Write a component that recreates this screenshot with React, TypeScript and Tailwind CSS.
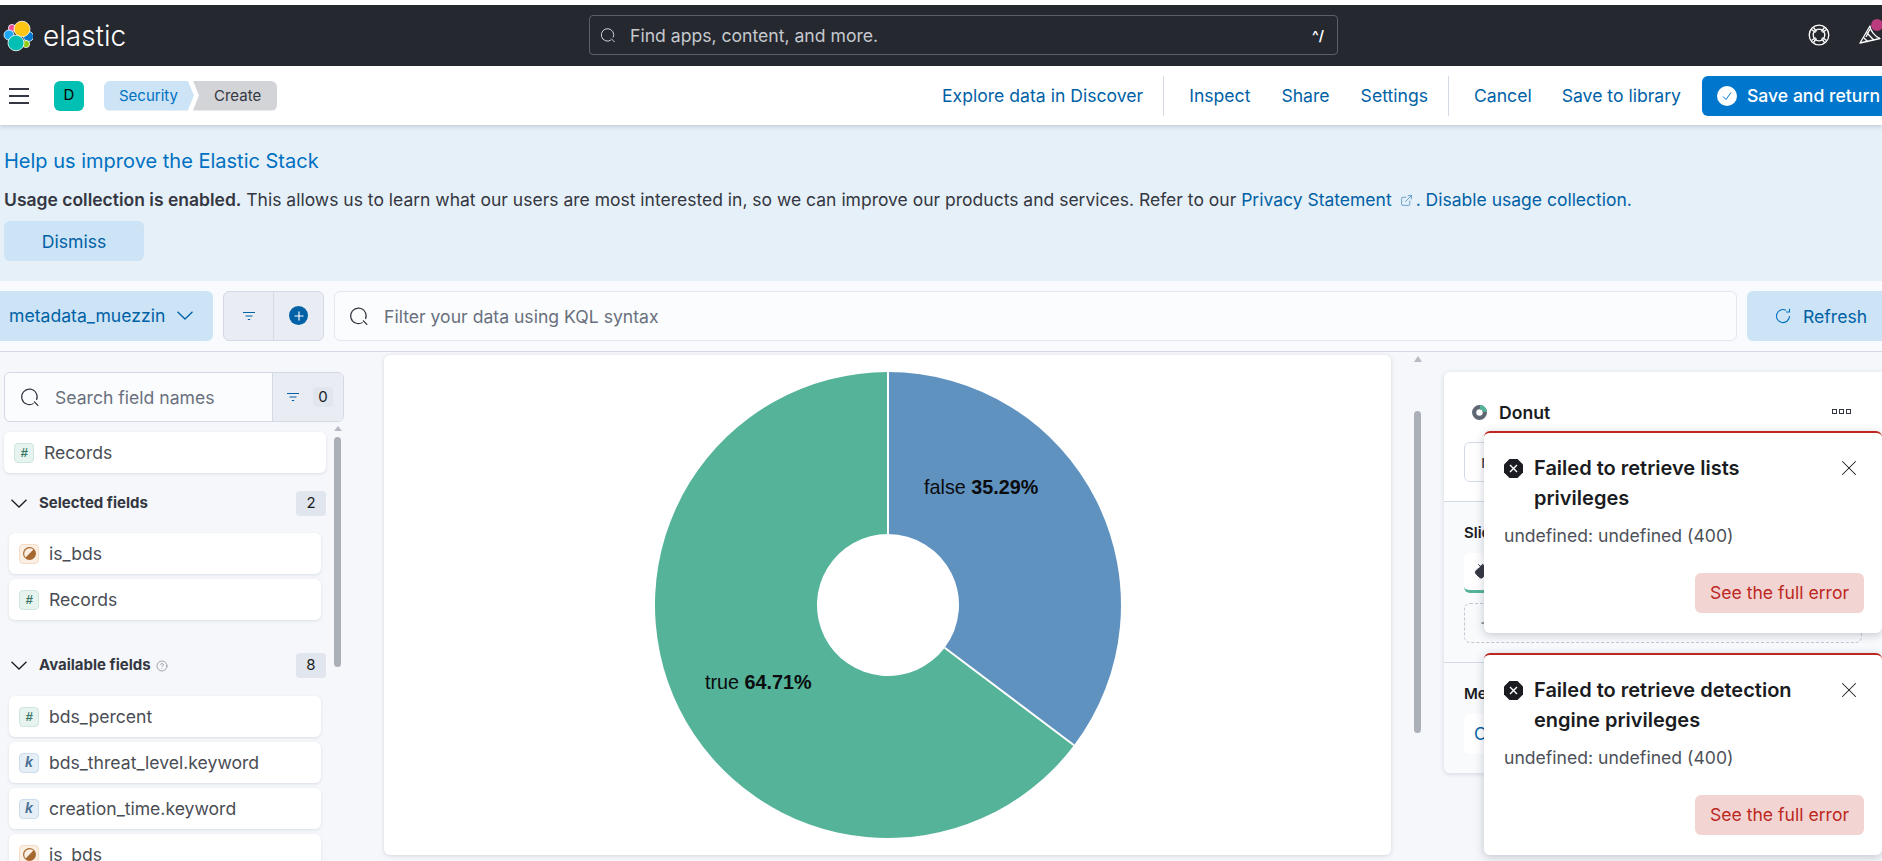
import { CircleHelp, ExternalLink, PaintBucket, Plus, X } from "lucide-react";

function Chevron({ color = "#1a1c21" }: { color?: string }) {
  return (
    <svg width="16" height="9" viewBox="0 0 16 9" fill="none" stroke={color} strokeWidth="1.3" className="shrink-0">
      <path d="M0.5 0.8 8 8 15.5 0.8" />
    </svg>
  );
}

function SearchIcon({ size = 16, color = "#343741" }: { size?: number; color?: string }) {
  return (
    <svg width={size} height={size} viewBox="0 0 16 16" fill="none" stroke={color} strokeWidth="0.9">
      <path d="M10.9 13.1A6.2 6.2 0 1 1 13.2 10.4" />
      <path d="M11.2 11.6 14.6 15" />
    </svg>
  );
}

function FilterIcon() {
  return (
    <svg width="14" height="14" viewBox="0 0 14 14" fill="none" stroke="#0061a6" strokeWidth="1.2">
      <path d="M1 3.5h12M3.5 7h7M5.8 10.5h2.4" />
    </svg>
  );
}

function ErrorIcon() {
  return (
    <svg width="19" height="19" viewBox="0 0 19 19" className="shrink-0">
      <polygon points="5.5,0 13.5,0 19,5.5 19,13.5 13.5,19 5.5,19 0,13.5 0,5.5" fill="#1a1c21" />
      <path d="M6 6l7 7M13 6l-7 7" stroke="#fff" strokeWidth="1.4" />
    </svg>
  );
}

function ElasticLogo() {
  return (
    <svg width="30" height="32" viewBox="0 0 30 32" fill="none" stroke="#fff" strokeWidth="0.8">
      <circle cx="9" cy="8" r="3.6" fill="#ee5097" />
      <circle cx="6" cy="15" r="5" fill="#1ba9f5" />
      <circle cx="25.5" cy="16.5" r="5" fill="#0077cc" />
      <circle cx="23" cy="24" r="3.6" fill="#93c90e" />
      <ellipse cx="19" cy="9" rx="8" ry="7.8" fill="#fec514" />
      <ellipse cx="13" cy="23" rx="8" ry="7.8" fill="#00bfb3" />
    </svg>
  );
}

function HelpRing() {
  return (
    <svg width="22" height="22" viewBox="0 0 22 22" fill="none" stroke="#fff" strokeWidth="1.3">
      <circle cx="11" cy="11" r="9.8" />
      <circle cx="11" cy="11" r="5.8" />
      <path d="M3.5 5.5l4 3M5.5 3.5l3 4M18.5 5.5l-4 3M16.5 3.5l-3 4M3.5 16.5l4-3M5.5 18.5l3-4M18.5 16.5l-4-3M16.5 18.5l-3-4" />
    </svg>
  );
}

function CheerIcon() {
  return (
    <svg width="24" height="24" viewBox="0 0 24 24" fill="none" stroke="#fff" strokeWidth="1.3" strokeLinejoin="round">
      <path d="M3 20 13 3c0 4 5 11 10 12.5Z" />
      <path d="M6.5 14.5 11 19M9.5 9.5 17 17.3M13 6 9 14" />
    </svg>
  );
}

function TypeIcon({ type }: { type: "number" | "keyword" | "boolean" }) {
  if (type === "boolean") {
    return (
      <span className="flex h-5 w-5 shrink-0 items-center justify-center rounded-[4px] border border-[#f6dcc6] bg-[#fbeee3]">
        <svg width="13" height="13" viewBox="0 0 12 12">
          <circle cx="6" cy="6" r="6" fill="#a5682f" />
          <path d="M2.4 9.6 A5.1 5.1 0 0 1 9.6 2.4 Z" fill="#fbeee3" />
        </svg>
      </span>
    );
  }
  const isNumber = type === "number";
  return (
    <span
      className={
        isNumber
          ? "flex h-5 w-5 shrink-0 items-center justify-center rounded-[4px] border border-[#cfe6dd] bg-[#e6f3ee] font-['Liberation_Sans',sans-serif] text-[13px] font-bold italic text-[#387765]"
          : "flex h-5 w-5 shrink-0 items-center justify-center rounded-[4px] border border-[#cbdced] bg-[#e6eef6] font-['Liberation_Sans',sans-serif] text-[14px] font-bold italic text-[#4a7194]"
      }
    >
      {isNumber ? "#" : "k"}
    </span>
  );
}

function FieldCard({ name, type }: { name: string; type: "number" | "keyword" | "boolean" }) {
  return (
    <div className="mx-[5px] flex h-[41px] shrink-0 items-center gap-[10px] rounded-[6px] bg-white pl-[10px] text-[17.6px] text-[#4a4d55] shadow-[0_1px_3px_rgba(60,70,100,0.14)]">
      <TypeIcon type={type} />
      <span className="mt-[2px]">{name}</span>
    </div>
  );
}

function SectionHeader({ title, count, help }: { title: string; count: number; help?: boolean }) {
  return (
    <div className="flex h-[25px] items-center">
      <span className="ml-[7px]">
        <Chevron />
      </span>
      <span className="ml-[12px] text-[15px] font-bold text-[#343741]">{title}</span>
      {help && <CircleHelp size={12} strokeWidth={1.2} className="ml-[5px] text-[#69707d]" />}
      <span className="ml-auto flex h-[25px] w-[30px] items-center justify-center rounded-[4px] bg-[#e0e5ee] text-[15px] text-[#1a1c21]">
        {count}
      </span>
    </div>
  );
}

function Toast({ lines }: { lines: string[] }) {
  return (
    <div className="h-[202px] w-[398px] rounded-[6px] border-t-2 border-[#bd271e] bg-white pl-[20px] pr-[18px] pt-[20px] shadow-[0_2px_10px_rgba(60,70,100,0.28)]">
      <div className="flex gap-[11px]">
        <span className="mt-[6px]">
          <ErrorIcon />
        </span>
        <div className="flex-1 text-[20px] leading-[30px] font-semibold text-[#1a1c21]">
          {lines.map((l) => (
            <div key={l}>{l}</div>
          ))}
        </div>
        <X size={26} strokeWidth={0.95} className="mr-[2px] mt-[2px] text-[#1a1c21]" />
      </div>
      <p className="mt-[11px] text-[17.6px] leading-[24px] text-[#4d5058]">undefined: undefined (400)</p>
      <div className="mt-[25px] flex justify-end">
        <button className="h-10 w-[169px] rounded-[6px] bg-[#f2d4d2] pt-[1px] text-[17.6px] text-[#bd271e]">See the full error</button>
      </div>
    </div>
  );
}

function Donut() {
  return (
    <svg width="468" height="468" viewBox="-234 -234 468 468" className="font-['Liberation_Sans',sans-serif]">
      <path d="M186 140.3A233 233 0 1 1 0 -233L0 -71A71 71 0 1 0 56.7 42.7Z" fill="#54b399" />
      <path d="M0 -233A233 233 0 0 1 186 140.3L56.7 42.7A71 71 0 0 0 0 -71Z" fill="#6092c0" />
      <path d="M0 -233V-71M186 140.3L56.7 42.7" stroke="#fff" strokeWidth="2" />
      <text x="36" y="-111" fontSize="19.8" fill="#0b0c0e">
        false <tspan fontWeight="700">35.29%</tspan>
      </text>
      <text x="-183" y="84" fontSize="19.8" fill="#0b0c0e">
        true <tspan fontWeight="700">64.71%</tspan>
      </text>
    </svg>
  );
}

export default function App() {
  return (
    <div className="relative flex h-[861px] w-[1882px] flex-col overflow-hidden bg-[#f5f7fa] font-[Inter,sans-serif]">
      <div className="h-[5px] shrink-0 bg-white" />
      {/* Global header */}
      <header className="relative flex h-[61px] shrink-0 items-center bg-[#25282f]">
        <div className="ml-[3px] flex items-center gap-[10px]">
          <ElasticLogo />
          <span className="text-[28px] font-light leading-none text-white">elastic</span>
        </div>
        <div className="absolute left-[589px] top-[10px] flex h-10 w-[749px] items-center rounded-[4px] border border-[#5c5f66] pl-[10px] pr-[13px] text-[17.6px] text-[#c6c9ce]">
          <SearchIcon size={16} color="#dfe3ea" />
          <span className="ml-[14px] mt-[2px]">Find apps, content, and more.</span>
          <span className="ml-auto text-[14px] font-semibold text-white">^/</span>
        </div>
        <span className="absolute left-[1808px] top-[19px]">
          <HelpRing />
        </span>
        <span className="absolute left-[1857px] top-[18px]">
          <CheerIcon />
        </span>
        <span className="absolute left-[1871px] top-[14px] h-3 w-3 rounded-full bg-[#bc3a7e]" />
      </header>

      {/* App menu bar */}
      <nav className="z-10 flex h-[59px] shrink-0 items-center bg-white text-[17.6px] text-[#0061a6] shadow-[0_2px_4px_rgba(60,70,100,0.2)]">
        <div className="ml-[9px] flex h-[16px] w-5 flex-col justify-between">
          <span className="h-[2px] bg-[#343741]" />
          <span className="h-[2px] bg-[#343741]" />
          <span className="h-[2px] bg-[#343741]" />
        </div>
        <span className="ml-[25px] flex h-[30px] w-[30px] items-center justify-center rounded-[6px] bg-[#00bfb3] text-[15px] text-black">D</span>
        <div className="ml-5 flex h-[30px] text-[15px]">
          <span className="flex w-[90px] items-center rounded-l-[6px] bg-[#cce4f5] pl-[15px] pt-[2px] text-[#0071c2] [clip-path:polygon(0_0,93%_0,100%_50%,93%_100%,0_100%)]">Security</span>
          <span className="-ml-[1px] flex w-[84px] items-center rounded-r-[6px] bg-[#d3d4d8] pl-[21px] pt-[2px] text-[#343741] [clip-path:polygon(0_0,100%_0,100%_100%,0_100%,7%_50%)]">Create</span>
        </div>
        <div className="ml-auto flex items-center">
          <span className="mt-[2px]">Explore data in Discover</span>
          <span className="ml-5 h-10 w-px bg-[#d3dae6]" />
          <span className="ml-[25px] mt-[2px]">Inspect</span>
          <span className="ml-[31px] mt-[2px]">Share</span>
          <span className="ml-[31px] mt-[2px]">Settings</span>
          <span className="ml-5 h-10 w-px bg-[#d3dae6]" />
          <span className="ml-[25px] mt-[2px]">Cancel</span>
          <span className="ml-[30px] mt-[2px]">Save to library</span>
          <button className="ml-[21px] flex h-10 w-[180px] items-center rounded-l-[6px] bg-[#0077cc] pl-[15px] font-medium whitespace-nowrap text-white">
            <svg width="20" height="20" viewBox="0 0 20 20" className="shrink-0">
              <circle cx="10" cy="10" r="10" fill="#fff" />
              <path d="M6 10.5l3 3 5-7" fill="none" stroke="#0077cc" strokeWidth="1" />
            </svg>
            <span className="ml-[10px] mt-[2px]">Save and return</span>
          </button>
        </div>
      </nav>

      {/* Telemetry callout */}
      <section className="h-[156px] shrink-0 bg-[#e6f0f8] pl-1 pt-[23px]">
        <h2 className="text-[20px] leading-[26px] text-[#0071c2]">Help us improve the Elastic Stack</h2>
        <p className="mt-[14px] flex items-center text-[17.5px] leading-[24px] text-[#343741]">
          <span>
            <strong className="font-semibold">Usage collection is enabled.</strong> This allows us to learn what our users are most interested in, so we can improve our products and services. Refer to our{" "}
            <span className="text-[#0061a6]">Privacy Statement</span>
          </span>
          <ExternalLink size={13} strokeWidth={1} className="ml-[8px] mr-[3px] text-[#0061a6]" />
          <span className="text-[#0061a6]">. Disable usage collection.</span>
        </p>
        <button className="mt-[9px] h-10 w-[140px] rounded-[6px] bg-[#cce4f5] pt-[2px] text-[17.6px] text-[#0061a6]">Dismiss</button>
      </section>

      {/* Query bar */}
      <div className="flex h-[71px] shrink-0 items-center border-b border-[#d3dae6] bg-[#f8fafd] pb-[1px]">
        <button className="flex h-[50px] w-[213px] items-center rounded-r-[6px] bg-[#cce4f5] pl-[9px] text-[17.6px] text-[#0061a6]">
          <span className="mt-[2px]">metadata_muezzin</span>
          <span className="ml-[12px]">
            <Chevron color="#0061a6" />
          </span>
        </button>
        <div className="ml-[10px] flex h-[50px] w-[101px] rounded-[6px] border border-[#d3dae6] bg-[#e9edf3]">
          <span className="flex w-[50px] items-center justify-center border-r border-[#d3dae6]">
            <FilterIcon />
          </span>
          <span className="flex flex-1 items-center justify-center">
            <span className="flex h-[19px] w-[19px] items-center justify-center rounded-full bg-[#0061a6]">
              <Plus size={14} strokeWidth={2} className="text-white" />
            </span>
          </span>
        </div>
        <div className="ml-[10px] flex h-[50px] w-[1403px] items-center rounded-[6px] border border-[#e3e7ef] bg-[#fbfcfd] pl-[14px] text-[17.6px] text-[#69707d]">
          <SearchIcon size={20} />
          <span className="ml-[15px] mt-[3px]">Filter your data using KQL syntax</span>
        </div>
        <button className="ml-[10px] flex h-[50px] w-[135px] items-center rounded-l-[6px] bg-[#cce4f5] pl-[28px] text-[17.6px] text-[#0061a6]">
          <svg width="16" height="16" viewBox="0 0 16 16" fill="none" stroke="#0071c2" strokeWidth="1.1">
            <path d="M14.5 8A6.5 6.5 0 1 1 11 2.3" />
            <path d="M14.5 0.8V4H11" />
          </svg>
          <span className="ml-[12px] mt-[3px]">Refresh</span>
        </button>
      </div>

      <div className="flex min-h-0 flex-1">
        {/* Field list */}
        <aside className="ml-1 w-[340px] shrink-0 pt-[20px]">
          <div className="flex h-[50px] overflow-hidden rounded-[6px] border border-[#d3dae6] bg-[#fbfcfd]">
            <div className="flex flex-1 items-center pl-[15px] text-[17.6px] text-[#69707d]">
              <SearchIcon size={20} />
              <span className="ml-[15px] mt-[2px]">Search field names</span>
            </div>
            <div className="flex w-[71px] items-center border-l border-[#d3dae6] bg-[#e9edf3] pl-[13px]">
              <FilterIcon />
              <span className="ml-[13px] flex h-5 w-5 items-center justify-center rounded-[4px] bg-[#e0e5ee] text-[15px] text-[#1a1c21]">0</span>
            </div>
          </div>
          <div className="mt-[10px] flex">
            <div className="flex w-[322px] flex-col">
              <div className="flex h-[41px] items-center gap-[10px] rounded-[6px] bg-white pl-[10px] text-[17.6px] text-[#4a4d55] shadow-[0_1px_3px_rgba(60,70,100,0.14)]">
                <TypeIcon type="number" />
                <span className="mt-[2px]">Records</span>
              </div>
              <div className="mt-[18px]">
                <SectionHeader title="Selected fields" count={2} />
              </div>
              <div className="mt-[17px] flex flex-col gap-[5px]">
                <FieldCard name="is_bds" type="boolean" />
                <FieldCard name="Records" type="number" />
              </div>
              <div className="mt-[33px]">
                <SectionHeader title="Available fields" count={8} help />
              </div>
              <div className="mt-[18px] flex flex-col gap-[5px]">
                <FieldCard name="bds_percent" type="number" />
                <FieldCard name="bds_threat_level.keyword" type="keyword" />
                <FieldCard name="creation_time.keyword" type="keyword" />
                <FieldCard name="is_bds" type="boolean" />
              </div>
            </div>
            <div className="ml-[8px] -mt-[6px] flex w-[7px] flex-col items-center">
              <span className="h-0 w-0 border-x-[4px] border-b-[5px] border-x-transparent border-b-[#b5bac3]" />
              <span className="mt-[6px] h-[230px] w-[7px] rounded-full bg-[#abb0b8]" />
            </div>
          </div>
        </aside>

        {/* Chart */}
        <main className="ml-[40px] mt-[3px] flex h-[500px] w-[1007px] shrink-0 items-center justify-center rounded-[6px] bg-white shadow-[0_1px_4px_rgba(60,70,100,0.18)]">
          <Donut />
        </main>

        <div className="ml-[23px] mt-[4px] flex w-[7px] shrink-0 flex-col items-center">
          <span className="h-0 w-0 border-x-[4px] border-b-[6px] border-x-transparent border-b-[#b5bac3]" />
          <span className="mt-[49px] h-[322px] w-[7px] rounded-full bg-[#abb0b8]" />
        </div>

        {/* Config panel */}
        <section className="ml-[23px] mt-[20px] h-[401px] w-[438px] shrink-0 overflow-hidden rounded-l-[6px] bg-[#f8fafc] shadow-[0_1px_5px_rgba(60,70,100,0.18)]">
          <div className="h-[130px] border-b border-[#d3dae6] bg-white">
            <div className="flex h-[70px] items-center pl-[28px] pr-[30px] pt-[10px]">
              <svg width="15" height="15" viewBox="0 0 16 16" fill="none" strokeWidth="4.5">
                <circle cx="8" cy="8" r="5.7" stroke="#5f6773" />
                <path d="M8.5 2.3a5.7 5.7 0 0 1 5.2 5" stroke="#54b399" />
              </svg>
              <span className="ml-[12px] mt-[2px] text-[17.6px] font-semibold text-[#1a1c21]">Donut</span>
              <svg width="20" height="6" viewBox="0 0 20 6" fill="none" stroke="#343741" strokeWidth="1" className="ml-auto">
                <rect x="0.5" y="0.5" width="4" height="4" />
                <rect x="7.5" y="0.5" width="4" height="4" />
                <rect x="14.5" y="0.5" width="4" height="4" />
              </svg>
            </div>
            <div className="ml-5 flex h-10 w-[400px] items-center rounded-[6px] border border-[#d3dae6] pl-4 text-[17.6px] text-[#343741]">r</div>
          </div>
          <div className="h-[161px] border-b border-[#d3dae6] px-5 pt-[20px]">
            <div className="text-[15px] font-semibold leading-[22px] text-[#1a1c21]">Slice by</div>
            <div className="mt-[9px] flex h-10 items-center rounded-[6px] border-b-[3px] border-[#54b399] bg-white pl-[10px] text-[#343741]">
              <PaintBucket size={18} fill="#343741" strokeWidth={1.2} />
            </div>
            <div className="mt-[10px] flex h-10 items-center rounded-[6px] border border-dashed border-[#c2c8d2] pl-[14px] text-[17.6px] text-[#343741]">
              <Plus size={14} className="mr-5" />
              Add or drag-and-drop a field
            </div>
          </div>
          <div className="px-5 pt-[20px]">
            <div className="text-[15px] font-semibold leading-[22px] text-[#1a1c21]">Metric</div>
            <div className="mt-[9px] flex h-10 items-center rounded-[6px] bg-white pl-[10px] text-[17.6px] text-[#0061a6]">Count of records</div>
          </div>
        </section>
      </div>

      {/* Toasts */}
      <div className="absolute left-[1484px] top-[431px] flex flex-col gap-5">
        <Toast lines={["Failed to retrieve lists", "privileges"]} />
        <Toast lines={["Failed to retrieve detection", "engine privileges"]} />
      </div>
    </div>
  );
}
